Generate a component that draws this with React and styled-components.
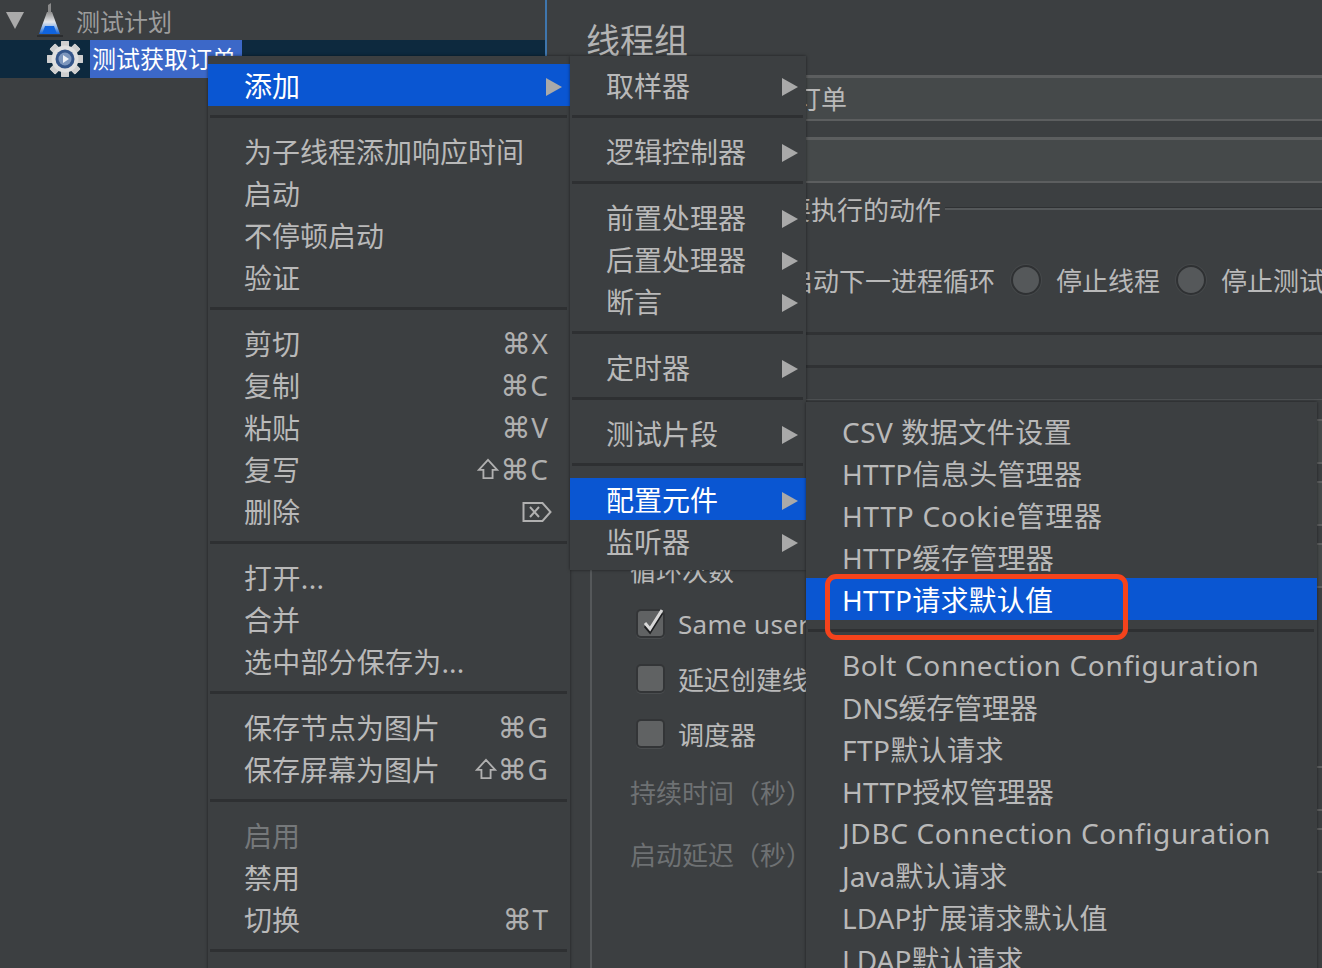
import React from "react";
import styled, { createGlobalStyle } from "styled-components";

const GlobalStyle = createGlobalStyle`
  html, body {
    margin: 0;
    padding: 0;
    height: 100%;
    overflow: hidden;
    background: #3c3f41;
  }
  * { box-sizing: border-box; }
`;

const Page = styled.div`
  position: relative;
  display: flex;
  width: 1322px;
  height: 968px;
  overflow: hidden;
  background: #3c3f41;
  color: #b9b9b9;
  font-family: "Noto Sans", "Noto Sans CJK SC", sans-serif;
`;

const TreePane = styled.div`
  width: 547px;
  flex-shrink: 0;
  border-right: 2px solid #3f76ad;
`;

const TreeRow = styled.div`
  display: flex;
  align-items: center;
  height: ${(p) => p.$height}px;
  padding-left: ${(p) => p.$indent}px;
  gap: ${(p) => p.$gap}px;
  background: ${(p) => (p.$active ? "#0d293e" : "transparent")};
  font-size: 24px;
  color: #9d9d9d;
`;

const Expander = styled.span`
  width: 0;
  height: 0;
  border-left: 9px solid transparent;
  border-right: 9px solid transparent;
  border-top: 17px solid #aaa;
`;

const TreeLabel = styled.span`
  display: block;
  height: 38px;
  line-height: 38px;
  padding: 0 2px;
  width: 152px;
  white-space: nowrap;
  overflow: hidden;
  background: #3c68c8;
  color: #fff;
`;

const DetailPane = styled.div`
  flex: 1;
  min-width: 0;
  padding: 20px 0 0 38px;
  font-size: 26px;
`;

const Title = styled.h1`
  margin: 0 0 15px 1px;
  height: 40px;
  line-height: 40px;
  font-size: 34px;
  font-weight: 400;
  color: #b4b4b4;
`;

const Field = styled.div`
  height: 46px;
  margin-bottom: ${(p) => p.$after}px;
  padding-left: 106px;
  line-height: 42px;
  white-space: nowrap;
  background: #45494a;
  border-top: 3px solid #5c5e5f;
  border-bottom: 2px solid #5c5e5f;
`;

const Legend = styled.div`
  display: flex;
  align-items: center;
  gap: 4px;
  height: 26px;
  margin: 14px 0 42px 18px;
  line-height: 26px;
  white-space: nowrap;
  &::after {
    content: "";
    flex: 1;
    height: 3px;
    margin-top: -4px;
    background: linear-gradient(#2f3133 50%, #55585a 50%);
  }
`;

const RadioRow = styled.div`
  display: flex;
  align-items: center;
  height: 30px;
  padding-left: 44px;
  white-space: nowrap;
`;

const Radio = styled.span`
  flex-shrink: 0;
  width: 30px;
  height: 30px;
  margin: 0 15px 0 ${(p) => (p.$first ? 0 : 16)}px;
  border-radius: 50%;
  background: #55585a;
  border: 2px solid #2f3133;
  box-shadow: 0 0 0 1px #45484a;
`;

const Strip = styled.div`
  height: 36px;
  margin-top: 37px;
  background: #3e4143;
  border-top: 3px solid;
  border-bottom: 3px solid;
  border-color: #303234;
`;

const ThreadBox = styled.div`
  height: 600px;
  margin: 31px -20px 0 5px;
  padding: 19px 0 0 38px;
  border: 1px solid #4f5254;
  border-left: 2px solid #55585a;
`;

const PropRow = styled.div`
  display: flex;
  align-items: center;
  height: 45px;
  margin-bottom: 17px;
  white-space: nowrap;
  color: ${(p) => (p.$disabled ? "#6e7173" : "inherit")};
`;

const PropLabel = styled.span`
  width: 300px;
  flex-shrink: 0;
  padding-top: ${(p) => p.$drop || 8}px;
`;

const PropInput = styled.span`
  flex: 1;
  height: 45px;
  background: ${(p) => (p.$disabled ? "#3c3f41" : "#45494a")};
  border-top: 2px solid #5c5e5f;
  border-bottom: 2px solid #5c5e5f;
`;

const CheckList = styled.div`
  margin: -9px 0 5px 6px;
`;

const CheckRow = styled.div`
  display: flex;
  align-items: center;
  gap: 13px;
  height: 55px;
  white-space: nowrap;
  letter-spacing: ${(p) => p.$spacing || 0}px;
`;

const CheckBox = styled.span`
  position: relative;
  flex-shrink: 0;
  width: 29px;
  height: 29px;
  border-radius: 5px;
  background: #606263;
  border: 2px solid #333537;
  box-shadow: 0 1px 0 #4a4d4f;
  svg {
    position: absolute;
    left: 0;
    top: -5px;
  }
`;

const Menu = styled.div`
  position: absolute;
  left: ${(p) => p.$left}px;
  top: ${(p) => p.$top}px;
  width: ${(p) => p.$width}px;
  padding: 8px 0 ${(p) => p.$tail}px;
  background: #3c3f41;
  box-shadow: 0 0 3px rgba(0, 0, 0, 0.5);
  font-size: 28px;
`;

const MenuRow = styled.div`
  display: flex;
  align-items: center;
  justify-content: space-between;
  height: 42px;
  padding: 0 ${(p) => p.$right}px 0 36px;
  white-space: nowrap;
  background: ${(p) => (p.$active ? "#0a56d2" : "transparent")};
  color: ${(p) => (p.$active ? "#fff" : p.$disabled ? "#75787a" : "#b9b9b9")};
`;

const MenuLabel = styled.span`
  letter-spacing: ${(p) => p.$spacing || 0}px;
`;

const Separator = styled.div`
  height: 24px;
  padding: 9px 3px 0 2px;
  &::before {
    content: "";
    display: block;
    height: 3px;
    background: #2e3032;
  }
`;

const Arrow = styled.span`
  width: 0;
  height: 0;
  transform: translateY(2px);
  border-top: 9px solid transparent;
  border-bottom: 9px solid transparent;
  border-left: 16px solid #a9a9a9;
`;

const Shortcut = styled.span`
  display: flex;
  align-items: center;
  font-family: "Noto Sans", "DejaVu Sans", sans-serif;
  font-size: 28px;
  color: #b0b0b0;
`;

const CommandKey = styled.span`
  margin: 0 1px 0 1px;
  font-family: "DejaVu Sans", sans-serif;
  font-size: 29px;
  line-height: 1;
  transform: translateY(1px);
`;

const DeleteWrap = styled.span`
  display: flex;
  margin-right: -4px;
  transform: translateY(1px);
`;

const Callout = styled.div`
  position: absolute;
  left: 825px;
  top: 574px;
  width: 303px;
  height: 66px;
  border: 5px solid #f5431c;
  border-radius: 11px;
`;

const FlaskIcon = () => (
  <svg width="26" height="36" viewBox="0 0 26 36">
    <defs>
      <linearGradient id="flaskBody" x1="0" y1="0" x2="0" y2="1">
        <stop offset="0" stopColor="#8c8c8c" />
        <stop offset="0.45" stopColor="#e4e6ea" />
        <stop offset="0.7" stopColor="#8fb6ea" />
        <stop offset="1" stopColor="#1560cf" />
      </linearGradient>
    </defs>
    <path d="M11 3l3-2v10l-3 1z" fill="#8a8a8a" />
    <path d="M10 10h5l8 22H2z" fill="url(#flaskBody)" />
    <path d="M8 24h9l3 8H5z" fill="#0f63de" />
    <rect x="0" y="33" width="26" height="2" fill="#2b2d2f" />
  </svg>
);

const GearIcon = () => (
  <svg width="36" height="38" viewBox="0 0 36 38">
    <g fill="#cfcfcf">
      {[0, 45, 90, 135, 180, 225, 270, 315].map((deg) => (
        <rect key={deg} x="14" y="1" width="8" height="36" rx="1" transform={`rotate(${deg} 18 19)`} />
      ))}
    </g>
    <circle cx="18" cy="19" r="13.5" fill="#e0e0e0" />
    <circle cx="18" cy="19" r="9.5" fill="#34558a" />
    <circle cx="18" cy="19" r="6.5" fill="#7d96bd" />
    <path d="M16 15l6 4-6 4z" fill="#eef1f6" />
  </svg>
);

const CheckMark = () => (
  <svg width="29" height="30" viewBox="0 0 29 30">
    <path d="M7 17l5 6L24 4" fill="none" stroke="#1d1e20" strokeWidth="3" transform="translate(0 3)" />
    <path d="M7 17l5 6L24 4" fill="none" stroke="#d8d8d8" strokeWidth="3" />
  </svg>
);

const ShiftIcon = () => (
  <svg width="22" height="24" viewBox="0 0 24 24">
    <path d="M12 2L22 13h-5v9H7v-9H2z" fill="none" stroke="#b0b0b0" strokeWidth="2" />
  </svg>
);

const DeleteIcon = () => (
  <svg width="30" height="22" viewBox="0 0 30 22">
    <path d="M1.5 2h19l8 9-8 9h-19z" fill="none" stroke="#b0b0b0" strokeWidth="2" />
    <path d="M8 6l9 10M17 6l-9 10" fill="none" stroke="#b0b0b0" strokeWidth="2" />
  </svg>
);

const SEP = "sep";

const mainMenu = [
  { label: "添加", arrow: true, active: true },
  SEP,
  { label: "为子线程添加响应时间" },
  { label: "启动" },
  { label: "不停顿启动" },
  { label: "验证" },
  SEP,
  { label: "剪切", keys: "X" },
  { label: "复制", keys: "C" },
  { label: "粘贴", keys: "V" },
  { label: "复写", keys: "C", shift: true },
  { label: "删除", del: true },
  SEP,
  { label: "打开...", spacing: 0.4 },
  { label: "合并" },
  { label: "选中部分保存为...", spacing: 0.2 },
  SEP,
  { label: "保存节点为图片", keys: "G" },
  { label: "保存屏幕为图片", keys: "G", shift: true },
  SEP,
  { label: "启用", disabled: true },
  { label: "禁用" },
  { label: "切换", keys: "T" },
  SEP,
];

const addMenu = [
  { label: "取样器", arrow: true },
  SEP,
  { label: "逻辑控制器", arrow: true },
  SEP,
  { label: "前置处理器", arrow: true },
  { label: "后置处理器", arrow: true },
  { label: "断言", arrow: true },
  SEP,
  { label: "定时器", arrow: true },
  SEP,
  { label: "测试片段", arrow: true },
  SEP,
  { label: "配置元件", arrow: true, active: true },
  { label: "监听器", arrow: true },
];

const configMenu = [
  { label: "CSV 数据文件设置", spacing: 0.5 },
  { label: "HTTP信息头管理器", spacing: 0.3 },
  { label: "HTTP Cookie管理器", spacing: 0.75 },
  { label: "HTTP缓存管理器", spacing: 0.3 },
  { label: "HTTP请求默认值", spacing: 0.2, active: true },
  SEP,
  { label: "Bolt Connection Configuration", spacing: 0.65 },
  { label: "DNS缓存管理器", spacing: -0.2 },
  { label: "FTP默认请求", spacing: 0.4 },
  { label: "HTTP授权管理器", spacing: 0.3 },
  { label: "JDBC Connection Configuration", spacing: 0.65 },
  { label: "Java默认请求" },
  { label: "LDAP扩展请求默认值" },
  { label: "LDAP默认请求" },
];

function PopupMenu({ items, left, top, width, keyPad = 8, tail = 8 }) {
  return (
    <Menu $left={left} $top={top} $width={width} $tail={tail}>
      {items.map((item, i) =>
        item === SEP ? (
          <Separator key={i} />
        ) : (
          <MenuRow key={i} $right={item.arrow ? 8 : keyPad} $active={item.active} $disabled={item.disabled}>
            <MenuLabel $spacing={item.spacing}>{item.label}</MenuLabel>
            {item.arrow && <Arrow />}
            {item.keys && (
              <Shortcut>
                {item.shift && <ShiftIcon />}
                <CommandKey>⌘</CommandKey>
                {item.keys}
              </Shortcut>
            )}
            {item.del && (
              <DeleteWrap>
                <DeleteIcon />
              </DeleteWrap>
            )}
          </MenuRow>
        )
      )}
    </Menu>
  );
}

export default function App() {
  return (
    <Page>
      <GlobalStyle />
      <TreePane>
        <TreeRow $height={40} $indent={6} $gap={13}>
          <Expander />
          <FlaskIcon />
          <span>测试计划</span>
        </TreeRow>
        <TreeRow $height={38} $indent={47} $gap={7} $active>
          <GearIcon />
          <TreeLabel>测试获取订单</TreeLabel>
        </TreeRow>
      </TreePane>

      <DetailPane>
        <Title>线程组</Title>
        <Field $after={16}>测试获取订单</Field>
        <Field $after={0} />
        <Legend>在取样器错误后要执行的动作</Legend>
        <RadioRow>
          <Radio $first />
          继续
          <Radio />
          启动下一进程循环
          <Radio />
          停止线程
          <Radio />
          停止测试
          <Radio />
          立即停止测试
        </RadioRow>
        <Strip />
        <ThreadBox>
          <PropRow>
            <PropLabel>线程数</PropLabel>
            <PropInput />
          </PropRow>
          <PropRow>
            <PropLabel>Ramp-Up时间（秒）</PropLabel>
            <PropInput />
          </PropRow>
          <PropRow>
            <PropLabel>循环次数</PropLabel>
            <PropInput />
          </PropRow>
          <CheckList>
            <CheckRow $spacing={0.3}>
              <CheckBox>
                <CheckMark />
              </CheckBox>
              Same user on each iteration
            </CheckRow>
            <CheckRow>
              <CheckBox />
              延迟创建线程直到需要
            </CheckRow>
            <CheckRow>
              <CheckBox />
              调度器
            </CheckRow>
          </CheckList>
          <PropRow $disabled>
            <PropLabel $drop={6}>持续时间（秒）</PropLabel>
            <PropInput $disabled />
          </PropRow>
          <PropRow $disabled>
            <PropLabel $drop={6}>启动延迟（秒）</PropLabel>
            <PropInput $disabled />
          </PropRow>
        </ThreadBox>
      </DetailPane>

      <PopupMenu items={mainMenu} left={208} top={56} width={362} keyPad={22} tail={20} />
      <PopupMenu items={addMenu} left={570} top={56} width={236} />
      <PopupMenu items={configMenu} left={806} top={402} width={511} tail={20} />
      <Callout />
    </Page>
  );
}
